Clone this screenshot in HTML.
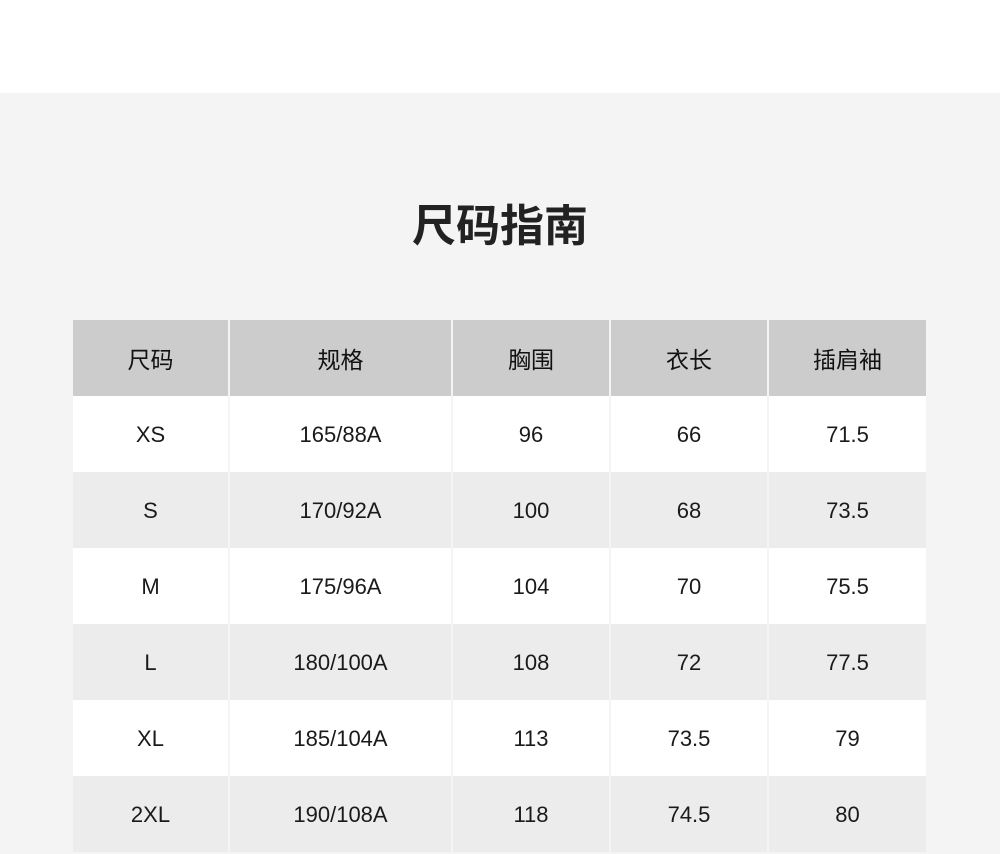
<!DOCTYPE html>
<html><head><meta charset="utf-8"><style>
body{margin:0;width:1000px;height:852px;overflow:hidden;background:#f4f4f4;font-family:"Liberation Sans","Noto Sans CJK SC",sans-serif;position:relative}
.top{position:absolute;left:0;top:0;width:1000px;height:93px;background:#fff}
h1{position:absolute;top:194px;left:0;width:1000px;margin:0;text-align:center;font-size:44px;font-weight:bold;color:#222;font-family:"Noto Sans CJK SC",sans-serif;line-height:56px}
.c{position:absolute;height:76px;line-height:78px;text-align:center;font-size:22px;color:#1a1a1a}
.h{background:#cccccc;font-family:"Noto Sans CJK SC",sans-serif;font-weight:normal;font-size:23px;line-height:76px;color:#111}
.w{background:#fff}.g{background:#ececec}
</style></head><body>
<div class="top"></div>
<h1>尺码指南</h1>
<div id="t"></div>
<script>
var L=[73,230,453,611,769],W=[155,221,156,156,157];
var rows=[["尺码","规格","胸围","衣长","插肩袖"],["XS","165/88A","96","66","71.5"],["S","170/92A","100","68","73.5"],["M","175/96A","104","70","75.5"],["L","180/100A","108","72","77.5"],["XL","185/104A","113","73.5","79"],["2XL","190/108A","118","74.5","80"]];
var h="";rows.forEach(function(r,i){var cls=i==0?"h":(i%2?"w":"g");r.forEach(function(t,j){h+='<div class="c '+cls+'" style="left:'+L[j]+'px;width:'+W[j]+'px;top:'+(320+i*76)+'px">'+t+'</div>';});});
document.getElementById("t").innerHTML=h;
</script>
</body></html>
